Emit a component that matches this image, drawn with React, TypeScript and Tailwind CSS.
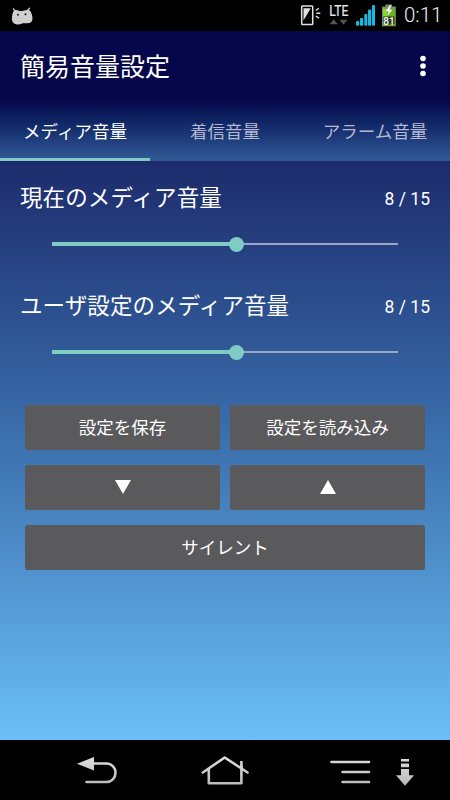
import clsx from "clsx";
import type { ReactNode } from "react";

const TABS = ["メディア音量", "着信音量", "アラーム音量"];
const MAX_VOLUME = 15;

function StatusBar() {
  return (
    <div className="flex h-[31px] shrink-0 items-center justify-between bg-black">
      <svg width="24" height="20" viewBox="0 0 24 20" className="ml-[11px]">
        <path
          d="M3.5 4.5 2.5 2.8M17 3.8 18.5 2.2"
          stroke="#cfcfcf"
          strokeWidth="1.3"
          strokeLinecap="round"
        />
        <path
          d="M3.5 4.2C5 3.6 6.5 4 8.5 4.9 11 5.3 12 4.7 14.5 4.2 17 3 19 4 20 6.2c1 2 1.7 5 1.4 7.2-.4 2.6-2.3 3.8-5.2 3.9-2 .1-3.5-.3-5 .1-2 .7-4.2 1.4-6.2.8C1.5 17.3.6 14.5 1 11c.3-3 .9-5.7 2.5-6.8Z"
          fill="#cfcfcf"
        />
        <circle cx="7" cy="8.8" r="1" fill="#222" />
        <circle cx="14.5" cy="8.2" r="1" fill="#222" />
      </svg>
      <div className="flex items-center">
        <svg width="101" height="31" viewBox="300 0 101 31">
          {/* phone with motion lines */}
          <rect x="301.7" y="6" width="11" height="18.5" rx="0.8" fill="none" stroke="#e2e2e2" strokeWidth="1.5" />
          <path d="M303.5 8.2h7.2l-7.2 12.3Z" fill="#e2e2e2" />
          <path d="m315.8 10.5 3-2.3M316.3 13.3h4M315.8 16l3.2 2.2" stroke="#e2e2e2" strokeWidth="1.4" />
          <text
            x="329.3"
            y="16"
            textLength="19"
            lengthAdjust="spacingAndGlyphs"
            fontSize="14"
            fill="#e8e8e8"
            stroke="#e8e8e8"
            strokeWidth="0.2"
            fontFamily="Roboto, sans-serif"
          >
            LTE
          </text>
          <path d="m329.7 24.2 4-5 4 5ZM339.5 19.7h8l-4 5Z" fill="#555" />
          {/* signal strength */}
          <g fill="#16b9e4">
            <rect x="356" y="21" width="3.2" height="4.8" rx="1" />
            <rect x="360" y="18" width="3.2" height="7.8" rx="1" />
            <rect x="364.3" y="14" width="3" height="11.8" rx="1" />
            <rect x="368" y="9.5" width="3.2" height="16.3" rx="1" />
            <rect x="372" y="5" width="3" height="20.8" rx="1" />
          </g>
          {/* battery */}
          <path d="M385.5 4.5h6.5v2h3.8v19.8h-13.8V6.5h3.5Z" fill="#7d8c72" />
          <rect x="383" y="9" width="11.8" height="16.5" fill="#69b51e" />
          <path d="M383 9h4v16.5h-4Z" fill="#8bd331" />
          <rect x="383.3" y="16.5" width="11.2" height="8" fill="#263b16" />
          <path d="m390 5.3-4.3 6h3l-1.2 4.7 4.8-6.2h-3l2-4.5Z" fill="#fff" />
          <text
            x="388.9"
            y="24.8"
            textAnchor="middle"
            fontSize="10"
            fontWeight="500"
            fill="#fff"
            fontFamily="Roboto, sans-serif"
          >
            81
          </text>
        </svg>
        <span className="w-[49px] pl-[3px] text-[20.5px] font-light leading-[31px] text-[#f0f0f0]">0:11</span>
      </div>
    </div>
  );
}

function VolumeRow({ label, value }: { label: string; value: number }) {
  return (
    <div className="h-[108px]">
      <div className="flex h-[34px] items-center justify-between px-5">
        <span className="pt-[3px] text-[22.5px] tracking-[0.1px]">{label}</span>
        <span className="pt-[5px] text-[17.5px]">
          {value} / {MAX_VOLUME}
        </span>
      </div>
      <div className="mx-[52px] mt-[22px] flex h-4 items-center">
        <div
          className="h-1 bg-[#80cbc4]"
          style={{ width: `${(value / MAX_VOLUME) * 100}%` }}
        />
        <div className="relative z-10 -mr-[7px] -ml-2 size-[15px] shrink-0 rounded-full bg-[#80cbc4]" />
        <div className="h-[1.5px] flex-1 bg-[#9ba4c3]" />
      </div>
    </div>
  );
}

function PanelButton({ children, wide }: { children: ReactNode; wide?: boolean }) {
  return (
    <button
      type="button"
      className={clsx(
        "flex h-[45px] items-center justify-center rounded-[2.5px] bg-[#5a5a5c] text-[17.5px] text-white",
        wide && "col-span-2",
      )}
    >
      {children}
    </button>
  );
}

function NavigationBar() {
  return (
    <div className="h-[60px] shrink-0 bg-black">
      <svg width="450" height="60" viewBox="0 740 450 60" fill="none">
        <defs>
          <linearGradient id="metal" x1="0" y1="757" x2="0" y2="790" gradientUnits="userSpaceOnUse">
            <stop stopColor="#dedede" />
            <stop offset="1" stopColor="#b4b4b4" />
          </linearGradient>
        </defs>
        <g stroke="url(#metal)" strokeWidth="2.6" strokeLinecap="round" strokeLinejoin="round">
          <path d="M93 763.5h13.5c5 0 9 4 9 9.2s-4 9.3-9 9.3H86.5" />
          <path d="m202.8 772.5 21.9-15 22.8 15M208.8 769v14.2h32.6V766.500" />
          <path d="M241.4 768.500V767" />
          <path d="M331.5 762H369M342.5 772H369M342.5 782H369" />
        </g>
        {/* chimney */}
        <path d="M240.100 761h2.600v8h-2.600Z" fill="#d2d2d2" />
        <path d="m77 763.7 17-6.8v13.5Z" fill="url(#metal)" />
        <path
          d="M401 759h8v2.5h-8ZM401 763.5h8v3.8h-8ZM401 769h8v6.3h5l-9 10.5-9-10.5h5Z"
          fill="url(#metal)"
        />
      </svg>
    </div>
  );
}

export default function App() {
  return (
    <div className="flex h-[800px] w-[450px] flex-col overflow-hidden bg-black font-[Roboto,'Noto_Sans_CJK_JP',sans-serif] text-white">
      <StatusBar />
      <header className="flex h-[130px] shrink-0 flex-col bg-linear-to-b from-[#06064b] from-[54%] to-[#335a98]">
        <div className="flex h-[70px] items-center justify-between pl-5">
          <h1 className="pt-[3px] text-[25px]">簡易音量設定</h1>
          <svg width="10" height="24" viewBox="0 0 10 24" fill="#fff" className="mr-[22.5px]">
            <circle cx="5" cy="4.5" r="2.8" />
            <circle cx="5" cy="12" r="2.8" />
            <circle cx="5" cy="19.5" r="2.8" />
          </svg>
        </div>
        <nav className="grid h-[60px] grid-cols-3">
          {TABS.map((tab, i) => (
            <button
              key={tab}
              type="button"
              className={clsx(
                "border-b-[3px] pt-1.5 text-[17.5px]",
                i === 0 ? "border-[#80cbc4] text-white" : "border-transparent text-[#b5b8d0]",
              )}
            >
              {tab}
            </button>
          ))}
        </nav>
      </header>
      <main className="flex-1 bg-linear-to-b from-[#1d2b6c] via-[#396aa8] via-[44%] to-[#6bbff7] pt-[19px]">
        <VolumeRow label="現在のメディア音量" value={8} />
        <VolumeRow label="ユーザ設定のメディア音量" value={8} />
        <div className="grid grid-cols-2 gap-x-2.5 gap-y-[15px] px-[25px] pt-[8.5px]">
          <PanelButton>
            <span className="pt-0.5">設定を保存</span>
          </PanelButton>
          <PanelButton>
            <span className="pt-0.5">設定を読み込み</span>
          </PanelButton>
          <PanelButton>
            <svg width="16" height="14" viewBox="0 0 16 14" fill="#fff">
              <path d="M0 0h16L8 14Z" />
            </svg>
          </PanelButton>
          <PanelButton>
            <svg width="16" height="14" viewBox="0 0 16 14" fill="#fff">
              <path d="M0 14h16L8 0Z" />
            </svg>
          </PanelButton>
          <PanelButton wide>
            <span className="pt-0.5">サイレント</span>
          </PanelButton>
        </div>
      </main>
      <NavigationBar />
    </div>
  );
}
